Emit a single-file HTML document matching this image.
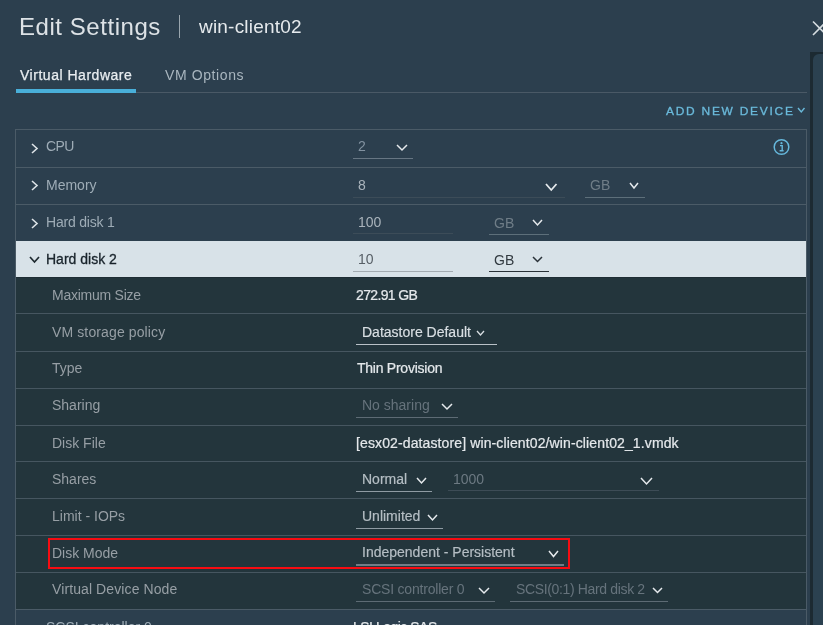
<!DOCTYPE html>
<html><head><meta charset="utf-8"><title>Edit Settings</title>
<style>
html,body{margin:0;padding:0;}
body{width:823px;height:625px;overflow:hidden;position:relative;background:#2c3f4e;font-family:"Liberation Sans", sans-serif;}
.t{position:absolute;white-space:pre;line-height:1;will-change:transform;}
.r{position:absolute;}
</style></head><body>
<div class="r" style="left:810px;top:52px;width:13px;height:573px;background:#1c2a32;"></div>
<div class="r" style="left:813px;top:54px;width:14px;height:580px;background:#2b4150;border-radius:6px 0 0 0"></div>
<svg class="r" style="left:811px;top:19px" width="14" height="18" viewBox="0 0 14 18"><path d="M2 2.5 L15.5 16 M2 16 L15.5 2.5" stroke="#d5dce0" stroke-width="1.6" fill="none"/></svg>
<div class="t" style="left:19px;top:15px;font-size:24px;color:#dde2e6;letter-spacing:0.55px;">Edit Settings</div>
<div class="r" style="left:179px;top:15px;width:1px;height:23px;background:#9aa6ae;"></div>
<div class="t" style="left:199px;top:17px;font-size:19px;color:#e6eaed;letter-spacing:0.2px;">win-client02</div>
<div class="t" style="left:20px;top:68px;font-size:14px;color:#e8edf0;letter-spacing:0.52px;-webkit-text-stroke:0.25px #e8edf0;">Virtual Hardware</div>
<div class="t" style="left:165px;top:68px;font-size:14px;color:#a9b6bf;letter-spacing:0.6px;">VM Options</div>
<div class="r" style="left:16px;top:92px;width:791px;height:1px;background:#4a5966;"></div>
<div class="r" style="left:16px;top:89px;width:120px;height:4px;background:#49afd9;"></div>
<div class="t" style="left:666px;top:106px;font-size:11px;color:#6ab9da;letter-spacing:1.6px;-webkit-text-stroke:0.3px #6ab9da;transform:scaleX(1.087);transform-origin:0 0">ADD NEW DEVICE</div>
<svg class="r" style="left:795.5px;top:106px" width="10.5" height="8" viewBox="0 0 10.5 8"><polyline points="2,2 5.25,6 8.5,2" fill="none" stroke="#6ab9da" stroke-width="1.4" stroke-linecap="butt" stroke-linejoin="miter"/></svg>
<div class="r" style="left:15px;top:129px;width:792px;height:1px;background:#4b5b67;"></div>
<div class="r" style="left:15px;top:129px;width:1px;height:496px;background:#4b5b67;"></div>
<div class="r" style="left:806px;top:129px;width:1px;height:496px;background:#4b5b67;"></div>
<div class="r" style="left:16px;top:167px;width:790px;height:1px;background:#4b5b67;"></div>
<div class="r" style="left:16px;top:204px;width:790px;height:1px;background:#4b5b67;"></div>
<div class="r" style="left:16px;top:241px;width:790px;height:36px;background:#d8e2e8;"></div>
<div class="r" style="left:16px;top:277px;width:790px;height:333px;background:#23353c;"></div>
<div class="r" style="left:16px;top:277px;width:790px;height:1px;background:#1e2d34;"></div>
<div class="r" style="left:16px;top:313px;width:790px;height:1px;background:#465660;"></div>
<div class="r" style="left:16px;top:351px;width:790px;height:1px;background:#465660;"></div>
<div class="r" style="left:16px;top:388px;width:790px;height:1px;background:#465660;"></div>
<div class="r" style="left:16px;top:425px;width:790px;height:1px;background:#465660;"></div>
<div class="r" style="left:16px;top:461px;width:790px;height:1px;background:#465660;"></div>
<div class="r" style="left:16px;top:498px;width:790px;height:1px;background:#465660;"></div>
<div class="r" style="left:16px;top:535px;width:790px;height:1px;background:#465660;"></div>
<div class="r" style="left:16px;top:572px;width:790px;height:1px;background:#465660;"></div>
<div class="r" style="left:16px;top:609px;width:790px;height:1px;background:#4b5b67;"></div>
<svg class="r" style="left:30px;top:142px" width="9" height="13" viewBox="0 0 9 13"><polyline points="2,2 7,6.5 2,11" fill="none" stroke="#dde3e7" stroke-width="1.6" stroke-linecap="butt" stroke-linejoin="miter"/></svg>
<div class="t" style="left:46px;top:139px;font-size:14px;color:#9eacb6;letter-spacing:-0.6px;">CPU</div>
<svg class="r" style="left:30px;top:179px" width="9" height="13" viewBox="0 0 9 13"><polyline points="2,2 7,6.5 2,11" fill="none" stroke="#dde3e7" stroke-width="1.6" stroke-linecap="butt" stroke-linejoin="miter"/></svg>
<div class="t" style="left:46px;top:178px;font-size:14px;color:#9eacb6;letter-spacing:0px;">Memory</div>
<svg class="r" style="left:30px;top:217px" width="9" height="13" viewBox="0 0 9 13"><polyline points="2,2 7,6.5 2,11" fill="none" stroke="#dde3e7" stroke-width="1.6" stroke-linecap="butt" stroke-linejoin="miter"/></svg>
<div class="t" style="left:46px;top:215px;font-size:14px;color:#9eacb6;letter-spacing:-0.2px;">Hard disk 1</div>
<svg class="r" style="left:28px;top:255px" width="13" height="9" viewBox="0 0 13 9"><polyline points="2,2 6.5,7 11,2" fill="none" stroke="#1f2a30" stroke-width="1.7" stroke-linecap="butt" stroke-linejoin="miter"/></svg>
<div class="t" style="left:46px;top:252px;font-size:14px;color:#18232b;letter-spacing:0px;-webkit-text-stroke:0.3px #18232b;">Hard disk 2</div>
<div class="t" style="left:358px;top:139px;font-size:14px;color:#8292a0;letter-spacing:0px;">2</div>
<svg class="r" style="left:395px;top:143px" width="14" height="9" viewBox="0 0 14 9"><polyline points="2,2 7.0,7 12,2" fill="none" stroke="#e6eaed" stroke-width="1.5" stroke-linecap="butt" stroke-linejoin="miter"/></svg>
<div class="r" style="left:353px;top:158px;width:60px;height:1px;background:#677683;"></div>
<svg class="r" style="left:772px;top:138px" width="19" height="19" viewBox="0 0 19 19"><circle cx="9.5" cy="9" r="7.3" fill="none" stroke="#66b8dc" stroke-width="1.5"/><circle cx="9.5" cy="5.2" r="1.1" fill="#66b8dc"/><path d="M8 7.6 H10.2 V12.6 M7.6 12.8 H11.6" stroke="#66b8dc" stroke-width="1.4" fill="none"/></svg>
<div class="t" style="left:358px;top:178px;font-size:14px;color:#aab4bc;letter-spacing:0px;">8</div>
<svg class="r" style="left:544px;top:182px" width="14.5" height="10" viewBox="0 0 14.5 10"><polyline points="2,2 7.25,8 12.5,2" fill="none" stroke="#e6eaed" stroke-width="1.8" stroke-linecap="butt" stroke-linejoin="miter"/></svg>
<div class="r" style="left:353px;top:197px;width:212px;height:1px;background:#3c4c58;"></div>
<div class="t" style="left:590px;top:178px;font-size:14px;color:#6f7d87;letter-spacing:0px;">GB</div>
<svg class="r" style="left:628px;top:181px" width="12" height="9" viewBox="0 0 12 9"><polyline points="2,2 6.0,7 10,2" fill="none" stroke="#e6eaed" stroke-width="1.5" stroke-linecap="butt" stroke-linejoin="miter"/></svg>
<div class="r" style="left:585px;top:197px;width:60px;height:1px;background:#5d6f7a;"></div>
<div class="t" style="left:358px;top:215px;font-size:14px;color:#a9b3bb;letter-spacing:0px;">100</div>
<div class="r" style="left:353px;top:233px;width:100px;height:1px;background:#3c4c58;"></div>
<div class="t" style="left:494px;top:216px;font-size:14px;color:#6f7d87;letter-spacing:0px;">GB</div>
<svg class="r" style="left:531px;top:218px" width="13" height="9" viewBox="0 0 13 9"><polyline points="2,2 6.5,7 11,2" fill="none" stroke="#e6eaed" stroke-width="1.5" stroke-linecap="butt" stroke-linejoin="miter"/></svg>
<div class="r" style="left:489px;top:234px;width:60px;height:1px;background:#5d6f7a;"></div>
<div class="t" style="left:358px;top:252px;font-size:14px;color:#575f66;letter-spacing:0px;">10</div>
<div class="r" style="left:353px;top:271px;width:100px;height:1px;background:#a3abb1;"></div>
<div class="t" style="left:494px;top:253px;font-size:14px;color:#323a40;letter-spacing:0px;">GB</div>
<svg class="r" style="left:531px;top:255px" width="13" height="8.5" viewBox="0 0 13 8.5"><polyline points="2,2 6.5,6.5 11,2" fill="none" stroke="#2a3238" stroke-width="1.5" stroke-linecap="butt" stroke-linejoin="miter"/></svg>
<div class="r" style="left:489px;top:271px;width:60px;height:1px;background:#2a3238;"></div>
<div class="t" style="left:52px;top:288px;font-size:14px;color:#979fa5;letter-spacing:-0.25px;">Maximum Size</div>
<div class="t" style="left:52px;top:325px;font-size:14px;color:#979fa5;letter-spacing:0.12px;">VM storage policy</div>
<div class="t" style="left:52px;top:361px;font-size:14px;color:#979fa5;letter-spacing:0px;">Type</div>
<div class="t" style="left:52px;top:398px;font-size:14px;color:#979fa5;letter-spacing:0px;">Sharing</div>
<div class="t" style="left:52px;top:436px;font-size:14px;color:#979fa5;letter-spacing:0px;">Disk File</div>
<div class="t" style="left:52px;top:472px;font-size:14px;color:#979fa5;letter-spacing:0px;">Shares</div>
<div class="t" style="left:52px;top:509px;font-size:14px;color:#979fa5;letter-spacing:0px;">Limit - IOPs</div>
<div class="t" style="left:52px;top:545.5px;font-size:14px;color:#979fa5;letter-spacing:0px;">Disk Mode</div>
<div class="t" style="left:52px;top:582px;font-size:14px;color:#979fa5;letter-spacing:0.1px;">Virtual Device Node</div>
<div class="t" style="left:356px;top:288px;font-size:14px;color:#e4e8eb;letter-spacing:-0.65px;-webkit-text-stroke:0.22px #e4e8eb;">272.91 GB</div>
<div class="t" style="left:362px;top:325px;font-size:14px;color:#d9dfe3;letter-spacing:0px;-webkit-text-stroke:0.2px #d9dfe3;">Datastore Default</div>
<svg class="r" style="left:475px;top:329px" width="11" height="8" viewBox="0 0 11 8"><polyline points="2,2 5.5,6 9,2" fill="none" stroke="#d9dfe3" stroke-width="1.3" stroke-linecap="butt" stroke-linejoin="miter"/></svg>
<div class="r" style="left:356px;top:344px;width:141px;height:1px;background:#b9c1c7;"></div>
<div class="t" style="left:357px;top:361px;font-size:14px;color:#e4e8eb;letter-spacing:-0.25px;-webkit-text-stroke:0.22px #e4e8eb;">Thin Provision</div>
<div class="t" style="left:362px;top:398px;font-size:14px;color:#66737c;letter-spacing:0px;">No sharing</div>
<svg class="r" style="left:440px;top:402px" width="14" height="9" viewBox="0 0 14 9"><polyline points="2,2 7.0,7 12,2" fill="none" stroke="#e6eaed" stroke-width="1.5" stroke-linecap="butt" stroke-linejoin="miter"/></svg>
<div class="r" style="left:356px;top:417px;width:102px;height:1px;background:#5d6b74;"></div>
<div class="t" style="left:356px;top:436px;font-size:14px;color:#e4e8eb;letter-spacing:0.12px;-webkit-text-stroke:0.22px #e4e8eb;">[esx02-datastore] win-client02/win-client02_1.vmdk</div>
<div class="t" style="left:362px;top:472px;font-size:14px;color:#b5bec4;letter-spacing:0px;-webkit-text-stroke:0.2px #b5bec4;">Normal</div>
<svg class="r" style="left:415px;top:476px" width="13" height="9" viewBox="0 0 13 9"><polyline points="2,2 6.5,7 11,2" fill="none" stroke="#e6eaed" stroke-width="1.5" stroke-linecap="butt" stroke-linejoin="miter"/></svg>
<div class="r" style="left:356px;top:491px;width:76px;height:1px;background:#8f9ba3;"></div>
<div class="t" style="left:453px;top:472px;font-size:14px;color:#6c7982;letter-spacing:0px;">1000</div>
<svg class="r" style="left:639px;top:476px" width="15" height="10" viewBox="0 0 15 10"><polyline points="2,2 7.5,8 13,2" fill="none" stroke="#e6eaed" stroke-width="1.5" stroke-linecap="butt" stroke-linejoin="miter"/></svg>
<div class="r" style="left:448px;top:490px;width:211px;height:1px;background:#3d4c56;"></div>
<div class="t" style="left:362px;top:509px;font-size:14px;color:#b5bec4;letter-spacing:0px;-webkit-text-stroke:0.2px #b5bec4;">Unlimited</div>
<svg class="r" style="left:426px;top:513px" width="13" height="9" viewBox="0 0 13 9"><polyline points="2,2 6.5,7 11,2" fill="none" stroke="#e6eaed" stroke-width="1.5" stroke-linecap="butt" stroke-linejoin="miter"/></svg>
<div class="r" style="left:356px;top:528px;width:87px;height:1px;background:#8f9ba3;"></div>
<div class="t" style="left:362px;top:545px;font-size:14px;color:#b5bec4;letter-spacing:0px;-webkit-text-stroke:0.2px #b5bec4;">Independent - Persistent</div>
<svg class="r" style="left:547px;top:549px" width="13" height="9.5" viewBox="0 0 13 9.5"><polyline points="2,2 6.5,7.5 11,2" fill="none" stroke="#e6eaed" stroke-width="1.5" stroke-linecap="butt" stroke-linejoin="miter"/></svg>
<div class="r" style="left:356px;top:564px;width:208px;height:2px;background:#6f7d87;"></div>
<div class="r" style="left:48px;top:538px;width:518px;height:27px;border:2px solid #f70c12"></div>
<div class="t" style="left:362px;top:582px;font-size:14px;color:#66737c;letter-spacing:-0.2px;">SCSI controller 0</div>
<svg class="r" style="left:477px;top:586px" width="14" height="9" viewBox="0 0 14 9"><polyline points="2,2 7.0,7 12,2" fill="none" stroke="#e6eaed" stroke-width="1.5" stroke-linecap="butt" stroke-linejoin="miter"/></svg>
<div class="r" style="left:356px;top:601px;width:139px;height:1px;background:#5d6b74;"></div>
<div class="t" style="left:516px;top:582px;font-size:14px;color:#66737c;letter-spacing:-0.35px;">SCSI(0:1) Hard disk 2</div>
<svg class="r" style="left:651px;top:586px" width="13" height="8.5" viewBox="0 0 13 8.5"><polyline points="2,2 6.5,6.5 11,2" fill="none" stroke="#e6eaed" stroke-width="1.5" stroke-linecap="butt" stroke-linejoin="miter"/></svg>
<div class="r" style="left:510px;top:601px;width:158px;height:1px;background:#5d6b74;"></div>
<div class="t" style="left:46px;top:620px;font-size:14px;color:#9eacb6;letter-spacing:0px;">SCSI controller 0</div>
<div class="t" style="left:353px;top:620px;font-size:14px;color:#e4e8eb;letter-spacing:-0.5px;-webkit-text-stroke:0.22px #e4e8eb;">LSI Logic SAS</div>
</body></html>
